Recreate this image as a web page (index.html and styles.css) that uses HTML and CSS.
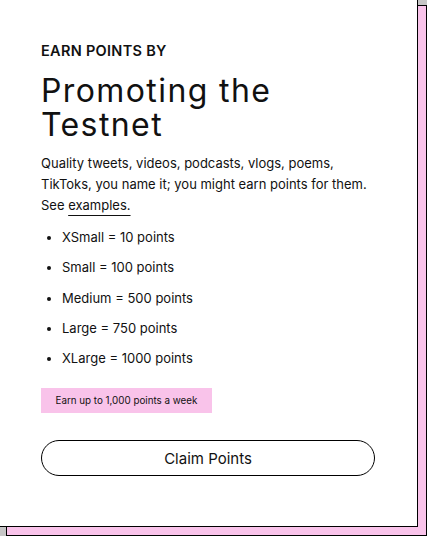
FILE: index.html
```html
<!DOCTYPE html>
<html>
<head>
<meta charset="utf-8">
<link rel="stylesheet" href="styles.css">
</head>
<body>
<div class="frame">
  <div class="card">
    <p class="eyebrow">EARN POINTS BY</p>
    <h1 class="title">Promoting the Testnet</h1>
    <p class="desc">Quality tweets, videos, podcasts, vlogs, poems, TikToks, you name it; you might earn points for them. See <a class="link" href="#">examples.</a></p>
    <ul class="tiers">
      <li>XSmall = 10 points</li>
      <li>Small = 100 points</li>
      <li>Medium = 500 points</li>
      <li>Large = 750 points</li>
      <li>XLarge = 1000 points</li>
    </ul>
    <div class="badge">Earn up to 1,000 points a week</div>
    <button class="claim">Claim Points</button>
  </div>
</div>
</body>
</html>
```

FILE: styles.css
```css
html, body {
  margin: 0;
  padding: 0;
}
body {
  background: #c6c6c6;
  width: 427px;
  height: 536px;
  overflow: hidden;
  font-family: Inter, "Liberation Sans", sans-serif;
  color: #111;
}
.frame {
  position: relative;
  margin: -4px 0 0 -3px;
  width: 421px;
  height: 531px;
  isolation: isolate;
}
.frame::before {
  content: "";
  position: absolute;
  top: 9px;
  left: 9px;
  right: -9px;
  bottom: -9px;
  background: #f9c3ea;
  border: 1px solid #000;
  z-index: -1;
}
.card {
  box-sizing: border-box;
  width: 100%;
  height: 100%;
  background: #fff;
  border: 1px solid #000;
  padding: 45px 40px 0 43px;
  display: flex;
  flex-direction: column;
}
.eyebrow {
  margin: 0;
  font-size: 14.5px;
  font-weight: 600;
  line-height: 18px;
  letter-spacing: 0.3px;
}
.title {
  margin: 14px 0 0;
  max-width: 300px;
  font-size: 32px;
  font-weight: 400;
  line-height: 34px;
  letter-spacing: 1.4px;
}
.desc {
  margin: 11px 0 0;
  font-size: 13px;
  line-height: 21px;
}
.link {
  color: #111;
  text-decoration: underline;
  text-decoration-thickness: 1px;
  text-underline-offset: 5px;
}
.tiers {
  margin: 11px 0 0;
  padding: 0 0 0 21px;
  font-size: 13px;
  line-height: 20px;
}
.tiers li {
  margin-bottom: 10.25px;
}
.badge {
  align-self: flex-start;
  margin-top: 10px;
  background: #f9c3ea;
  font-size: 9.8px;
  padding: 0 14.5px;
  height: 25px;
  line-height: 25px;
}
.claim {
  margin-top: 27px;
  width: 334px;
  height: 36px;
  border: 1px solid #000;
  border-radius: 18px;
  background: #fff;
  font-family: inherit;
  font-size: 15px;
  color: #111;
}
```
